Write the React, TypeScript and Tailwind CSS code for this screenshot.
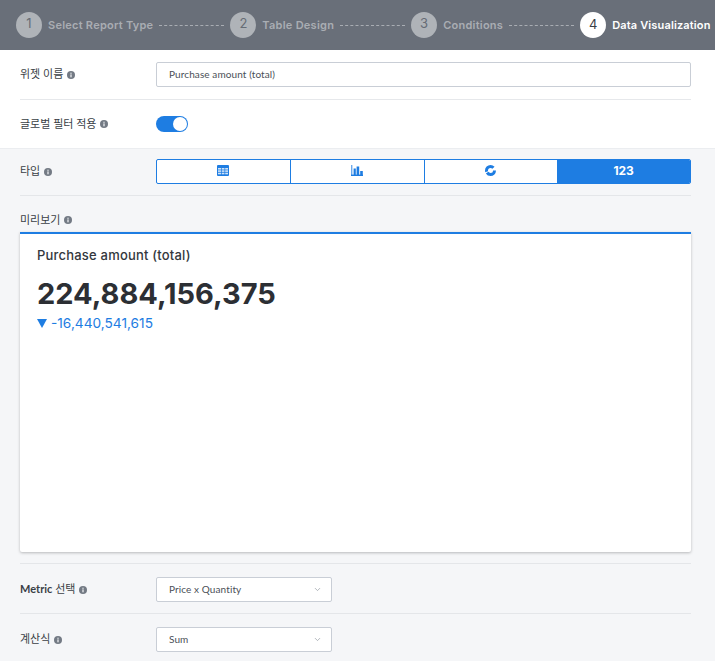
import { ChevronDown } from 'lucide-react';

const FONT = "font-['Lato','Noto_Sans_CJK_KR',sans-serif]";
const INTER = "font-['Inter','Noto_Sans_CJK_KR',sans-serif]";

function InfoDot() {
  return (
    <svg viewBox="0 0 8 8" className="h-2 w-2 flex-shrink-0">
      <circle cx="4" cy="4" r="4" fill="#737a84" />
      <rect x="3.4" y="3.4" width="1.2" height="2.9" fill="#f5f6f8" />
      <rect x="3.4" y="1.7" width="1.2" height="1.1" fill="#f5f6f8" />
    </svg>
  );
}

function Step({ n, label, active }: { n: number; label: string; active?: boolean }) {
  return (
    <div className={`${INTER} flex flex-shrink-0 items-center gap-[6px]`}>
      <div
        className={
          active
            ? 'flex h-[26px] w-[26px] items-center justify-center rounded-full bg-white pb-px text-[13px] text-[#3a3f46]'
            : 'flex h-[26px] w-[26px] items-center justify-center rounded-full bg-[#afb3b8] pb-[2px] text-[13px] text-[#666c75]'
        }
      >
        {n}
      </div>
      <span className={active ? 'text-[11px] font-semibold tracking-[0.15px] text-white' : 'text-[11px] font-semibold tracking-[0.25px] text-[#a9adb3]'}>
        {label}
      </span>
    </div>
  );
}

function Dashes({ width }: { width: string }) {
  return <div className={`${width} mx-[6px] h-0 flex-shrink-0 border-t border-dashed border-[#a9adb3]`} />;
}

function Label({ text }: { text: React.ReactNode }) {
  return (
    <div className="flex w-[136px] flex-shrink-0 items-center gap-[4px] text-[11px] text-[#3a3f46]">
      <span>{text}</span>
      <InfoDot />
    </div>
  );
}

function SelectBox({ value }: { value: string }) {
  return (
    <div className="flex h-[25px] w-[176px] items-center justify-between rounded-[2px] border border-[#c9ced6] bg-white pl-[12px] pr-[9px] text-[10px] tracking-[0.1px] text-[#4a4f57]">
      <span className="pb-px">{value}</span>
      <ChevronDown className="h-[9px] w-[9px] text-[#9aa0a8]" />
    </div>
  );
}

function TableIcon() {
  return (
    <svg viewBox="0 0 12 11" className="h-[11px] w-[12px]">
      <rect width="12" height="11" rx="1" fill="#1e7de2" />
      <g fill="#cfe3f8">
        <rect x="1" y="3" width="3" height="1.6" />
        <rect x="4.7" y="3" width="2.8" height="1.6" />
        <rect x="8.2" y="3" width="2.8" height="1.6" />
        <rect x="1" y="5.3" width="3" height="1.6" />
        <rect x="4.7" y="5.3" width="2.8" height="1.6" />
        <rect x="8.2" y="5.3" width="2.8" height="1.6" />
        <rect x="1" y="7.7" width="3" height="1.6" />
        <rect x="4.7" y="7.7" width="2.8" height="1.6" />
        <rect x="8.2" y="7.7" width="2.8" height="1.6" />
      </g>
    </svg>
  );
}

function BarIcon() {
  return (
    <svg viewBox="0 0 12 11" className="h-[11px] w-[12px]" fill="#1e7de2">
      <rect x="0" y="0" width="1.4" height="11" opacity="0.65" />
      <rect x="0" y="9.6" width="12" height="1.4" />
      <rect x="2.6" y="3.5" width="2.2" height="7" />
      <rect x="5.6" y="1.5" width="2.6" height="9" />
      <rect x="9.2" y="6" width="2.6" height="4.5" />
    </svg>
  );
}

function DonutIcon() {
  return (
    <svg viewBox="0 0 11 11" className="h-[11px] w-[11px]" fill="none" stroke="#1e7de2" strokeWidth="3">
      <circle cx="5.5" cy="5.5" r="4" strokeDasharray="10 1 10.6 3.5" />
    </svg>
  );
}

export default function App() {
  return (
    <div className={`${FONT} h-[661px] w-[715px] overflow-hidden bg-[#f5f6f8]`}>
      <div className="flex h-[50px] items-center overflow-hidden bg-[#696f79] pl-[16px]">
        <Step n={1} label="Select Report Type" />
        <Dashes width="w-[65px]" />
        <Step n={2} label="Table Design" />
        <Dashes width="w-[65px]" />
        <Step n={3} label="Conditions" />
        <Dashes width="w-[65px]" />
        <Step n={4} label="Data Visualization" active />
      </div>

      <div className="border-b border-[#ebedf0] bg-white pb-[1px] pl-[20px] pr-[24px]">
        <div className="flex h-[50px] items-center border-b border-[#e6e8eb]">
          <Label text="위젯 이름" />
          <div className="flex h-[25px] flex-1 items-center rounded-[2px] border border-[#c9ced6] bg-white pl-[12px] text-[10px] tracking-[0.1px] text-[#4a4f57]">
            Purchase amount (total)
          </div>
        </div>
        <div className="flex h-[47px] items-center pt-px">
          <Label text="글로벌 필터 적용" />
          <div className="flex h-4 w-8 items-center justify-end rounded-full bg-[#1e7de2] pr-px">
            <div className="h-[14px] w-[14px] rounded-full bg-white" />
          </div>
        </div>
      </div>

      <div className="pl-[20px] pr-[24px]">
        <div className="flex h-[47px] items-center border-b border-[#e4e6e9] pb-px">
          <Label text="타입" />
          <div className="flex h-[25px] flex-1 overflow-hidden rounded-[2px] border border-[#1e7de2] bg-white">
            <div className="flex flex-1 items-center justify-center border-r border-[#1e7de2] pb-[2px]">
              <TableIcon />
            </div>
            <div className="flex flex-1 items-center justify-center border-r border-[#1e7de2] pb-[2px]">
              <BarIcon />
            </div>
            <div className="flex flex-1 items-center justify-center pb-[2px]">
              <DonutIcon />
            </div>
            <div className={`${INTER} flex flex-1 items-center justify-center bg-[#1e7de2] pb-[2px] text-xs font-bold text-white`}>
              123
            </div>
          </div>
        </div>

        <div className="flex h-[36px] items-end pb-[4px]">
          <Label text="미리보기" />
        </div>
        <div className={`${INTER} h-[320px] rounded-b-[2px] border-t-2 border-[#1e7de2] bg-white px-[17px] pt-[13px] shadow-[0_1px_3px_rgba(0,0,0,0.25)]`}>
          <div className="text-[13px] font-medium leading-[16px] tracking-[0.2px] text-[#33373d]">Purchase amount (total)</div>
          <div className="mt-[13px] text-[29px] font-bold leading-[36px] text-[#2c2f34]">224,884,156,375</div>
          <div className="mt-[3px] flex items-center gap-[4px] text-[13.7px] leading-[17px] text-[#1e7de2]">
            <svg viewBox="0 0 10 9" className="h-[9px] w-[10px]">
              <path d="M0 0H10L5 9Z" fill="#1e7de2" />
            </svg>
            <span>-16,440,541,615</span>
          </div>
        </div>

        <div className="mt-[11px] flex h-[50px] items-center border-t border-[#e4e6e9] pt-[2px]">
          <Label text={<><span className="font-bold">Metric</span> 선택</>} />
          <SelectBox value="Price x Quantity" />
        </div>
        <div className="flex h-[50px] items-center border-t border-[#e4e6e9] pt-[2px]">
          <Label text="계산식" />
          <SelectBox value="Sum" />
        </div>
      </div>
    </div>
  );
}
